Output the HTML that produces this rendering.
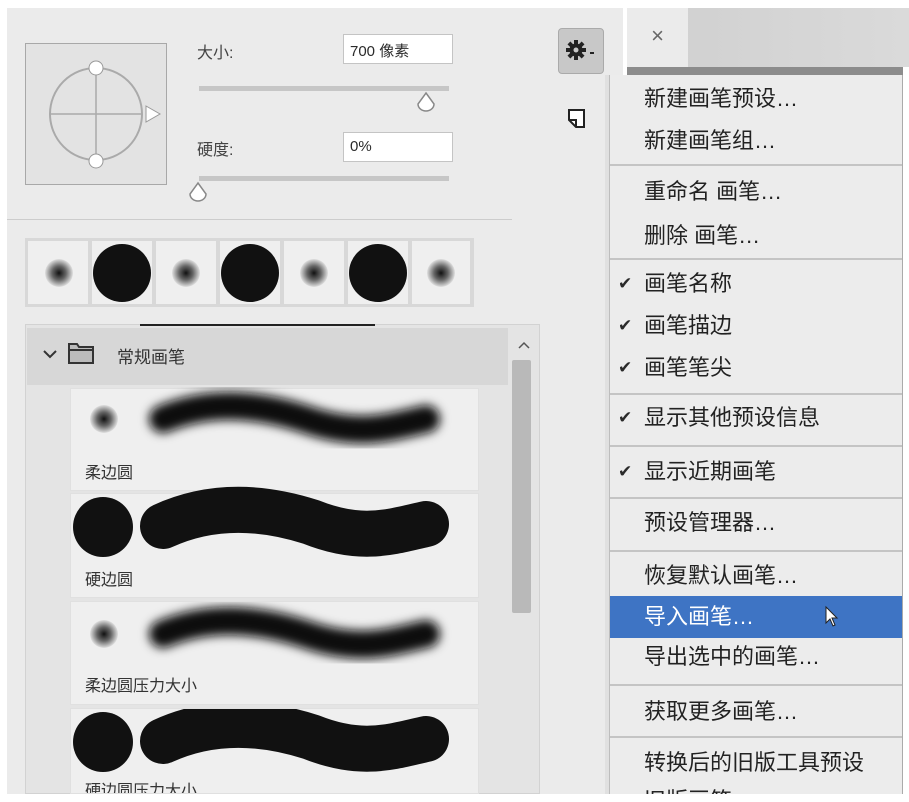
<!DOCTYPE html>
<html><head><meta charset="utf-8"><style>
*{margin:0;padding:0;box-sizing:border-box}
body{width:909px;height:802px;background:#fff;position:relative;overflow:hidden;font-family:"Liberation Sans","Noto Sans CJK SC",sans-serif;color:#2a2a2a}
.a{position:absolute}
svg{overflow:visible}
.panel{left:7px;top:8px;width:616px;height:786px;background:#ebebeb}
.lbl{font-size:16px;color:#444}
.inp{background:#fff;border:1px solid #c4c4c4;font-size:15px;padding:5px 6px;height:30px;width:110px}
.track{height:5px;background:#c6c6c6;width:250px;left:199px}
.menu{left:609px;top:75px;width:294px;height:719px;background:#ececec;border-left:1px solid #bdbdbd;border-right:1px solid #aaa;overflow:hidden}
.mi{position:absolute;left:34px;font-size:22px;color:#222;line-height:28px;white-space:nowrap}
.ck{position:absolute;left:8px;font-size:17px;line-height:28px}
.sep{position:absolute;left:0;width:292px;height:2px;background:#c4c4c4}
.item{left:70px;width:409px;background:#efefef;border:1px solid #e0e0e0}
.name{position:absolute;left:14px;font-size:16px;color:#333}
</style></head><body>
<div class="a panel"></div>
<div class="a" style="left:25px;top:43px;width:142px;height:142px;background:#e3e3e3;border:1px solid #a8a8a8"></div>
<svg class="a" style="left:25px;top:43px" width="150" height="142">
<ellipse cx="71" cy="71" rx="46" ry="46" fill="none" stroke="#aaa" stroke-width="2"/>
<line x1="25" y1="71" x2="117" y2="71" stroke="#aaa" stroke-width="1.5"/>
<line x1="71" y1="25" x2="71" y2="117" stroke="#aaa" stroke-width="1.5"/>
<circle cx="71" cy="25" r="7" fill="#fff" stroke="#999"/>
<circle cx="71" cy="118" r="7" fill="#fff" stroke="#999"/>
<path d="M121 63 L135 71 L121 79 Z" fill="#fff" stroke="#999"/>
</svg>
<div class="a lbl" style="left:197px;top:39px">大小:</div>
<div class="a inp" style="left:343px;top:34px">700 像素</div>
<div class="a track" style="top:86px"></div>
<svg class="a" style="left:414px;top:90px" width="26" height="26"><path d="M12 3 L20 14 A8 7 0 0 1 4 14 Z" fill="#fff" stroke="#888" stroke-width="1.5"/></svg>
<div class="a lbl" style="left:197px;top:136px">硬度:</div>
<div class="a inp" style="left:343px;top:132px">0%</div>
<div class="a track" style="top:176px"></div>
<svg class="a" style="left:186px;top:180px" width="26" height="26"><path d="M12 3 L20 14 A8 7 0 0 1 4 14 Z" fill="#fff" stroke="#888" stroke-width="1.5"/></svg>
<div class="a" style="left:7px;top:219px;width:505px;height:1px;background:#ccc"></div>
<div class="a" style="left:558px;top:28px;width:46px;height:46px;background:#c8c8c8;border:1px solid #aaa;border-radius:4px"></div>
<svg class="a" style="left:566px;top:40px" width="30" height="20">
<g transform="translate(10,10)" fill="#222"><circle r="6.5"/><g id="t"><rect x="-2" y="-10" width="4" height="20"/></g><use href="#t" transform="rotate(45)"/><use href="#t" transform="rotate(90)"/><use href="#t" transform="rotate(135)"/></g>
<circle cx="10" cy="10" r="2.5" fill="#c8c8c8"/><rect x="24" y="12" width="4" height="2" fill="#222"/></svg>
<svg class="a" style="left:567px;top:108px" width="20" height="22"><path d="M2 2 H17 V19 H9 L2 12 Z M2 12 H9 V19" fill="#fff" stroke="#222" stroke-width="2"/></svg>
<div class="a" style="left:605px;top:75px;width:5px;height:720px;background:#e0e0e0"></div>
<div class="a" style="left:623px;top:8px;width:4px;height:67px;background:#fff"></div>
<div class="a" style="left:627px;top:8px;width:282px;height:59px;background:linear-gradient(90deg,#cfcfcf,#dadada)"></div>
<div class="a" style="left:627px;top:8px;width:61px;height:59px;background:#ebebeb;font-size:22px;color:#666;text-align:center;line-height:56px">×</div>
<div class="a" style="left:627px;top:67px;width:276px;height:8px;background:#8c8c8c"></div>
<div class="a" style="left:25px;top:238px;width:449px;height:69px;background:#d8d8d8"></div>
<svg class="a" style="left:25px;top:238px" width="449" height="69">
<defs><radialGradient id="sg"><stop offset="0" stop-color="#111"/><stop offset=".5" stop-color="#666"/><stop offset="1" stop-color="#e0e0e0"/></radialGradient></defs>
<g fill="#efefef"><rect x="3" y="3" width="60" height="63"/><rect x="67" y="3" width="60" height="63"/><rect x="131" y="3" width="60" height="63"/><rect x="195" y="3" width="60" height="63"/><rect x="259" y="3" width="60" height="63"/><rect x="323" y="3" width="60" height="63"/><rect x="387" y="3" width="58" height="63"/></g>
<circle cx="34" cy="35" r="14" fill="url(#sg)"/><circle cx="97" cy="35" r="29" fill="#111"/>
<circle cx="161" cy="35" r="14" fill="url(#sg)"/><circle cx="225" cy="35" r="29" fill="#111"/>
<circle cx="289" cy="35" r="14" fill="url(#sg)"/><circle cx="353" cy="35" r="29" fill="#111"/>
<circle cx="416" cy="35" r="14" fill="url(#sg)"/>
</svg>
<div class="a" style="left:25px;top:324px;width:515px;height:470px;background:#e4e4e4;border:1px solid #d2d2d2"></div>
<div class="a" style="left:140px;top:324px;width:235px;height:2px;background:#222"></div>
<div class="a" style="left:27px;top:328px;width:481px;height:57px;background:#d7d7d7"></div>
<svg class="a" style="left:42px;top:348px" width="16" height="12"><path d="M2 3 L8 9 L14 3" fill="none" stroke="#333" stroke-width="2"/></svg>
<svg class="a" style="left:67px;top:342px" width="30" height="24"><path d="M2 2 H10 L12 5 H26 V21 H2 Z M2 8 H26" fill="#bbb" stroke="#333" stroke-width="2"/></svg>
<div class="a" style="left:117px;top:343px;font-size:17px;color:#333">常规画笔</div>
<svg class="a" style="left:518px;top:342px" width="12" height="8"><path d="M1 6 L6 1 L11 6" fill="none" stroke="#555" stroke-width="1.5"/></svg>
<div class="a" style="left:512px;top:360px;width:19px;height:253px;background:#b9b9b9;border-radius:2px"></div>
<svg width="0" height="0" class="a"><defs><filter id="bl" x="-20%" y="-80%" width="140%" height="260%"><feGaussianBlur stdDeviation="5"/></filter></defs></svg>
<div class="a item" style="top:388px;height:103px"><svg width="409" height="70"><circle cx="33" cy="30" r="14" fill="url(#sg)"/><path d="M92 30 C140 10 190 15 240 32 C290 48 320 38 355 30" fill="none" stroke="#111" stroke-width="28" stroke-linecap="round" filter="url(#bl)"/></svg><div class="name" style="top:70px">柔边圆</div></div>
<div class="a item" style="top:493px;height:105px"><svg width="409" height="72"><circle cx="32" cy="33" r="30" fill="#111"/><path d="M92 32 C140 10 190 12 240 28 C290 48 320 38 355 30" fill="none" stroke="#111" stroke-width="46" stroke-linecap="round"/></svg><div class="name" style="top:72px">硬边圆</div></div>
<div class="a item" style="top:601px;height:104px"><svg width="409" height="70"><circle cx="33" cy="32" r="14" fill="url(#sg)"/><path d="M92 32 C140 12 190 17 240 34 C290 50 320 40 355 32" fill="none" stroke="#111" stroke-width="28" stroke-linecap="round" filter="url(#bl)"/></svg><div class="name" style="top:70px">柔边圆压力大小</div></div>
<div class="a item" style="top:708px;height:86px;overflow:hidden"><svg width="409" height="72"><circle cx="32" cy="33" r="30" fill="#111"/><path d="M92 32 C140 10 190 12 240 28 C290 48 320 38 355 30" fill="none" stroke="#111" stroke-width="46" stroke-linecap="round"/></svg><div class="name" style="top:68px">硬边圆压力大小</div></div>
<div class="a menu">
<div class="mi" style="top:10px">新建画笔预设…</div>
<div class="mi" style="top:52px">新建画笔组…</div>
<div class="sep" style="top:89px"></div>
<div class="mi" style="top:103px">重命名 画笔…</div>
<div class="mi" style="top:147px">删除 画笔…</div>
<div class="sep" style="top:183px"></div>
<div class="ck" style="top:195px">✔</div><div class="mi" style="top:195px">画笔名称</div>
<div class="ck" style="top:237px">✔</div><div class="mi" style="top:237px">画笔描边</div>
<div class="ck" style="top:279px">✔</div><div class="mi" style="top:279px">画笔笔尖</div>
<div class="sep" style="top:318px"></div>
<div class="ck" style="top:329px">✔</div><div class="mi" style="top:329px">显示其他预设信息</div>
<div class="sep" style="top:370px"></div>
<div class="ck" style="top:383px">✔</div><div class="mi" style="top:383px">显示近期画笔</div>
<div class="sep" style="top:422px"></div>
<div class="mi" style="top:434px">预设管理器…</div>
<div class="sep" style="top:475px"></div>
<div class="mi" style="top:487px">恢复默认画笔…</div>
<div class="a" style="left:0;top:521px;width:292px;height:42px;background:#3e74c4"></div>
<div class="mi" style="top:528px;color:#fff">导入画笔…</div>
<svg class="a" style="left:214px;top:531px" width="16" height="22"><path d="M2 1 V17 L6 13 L9 20 L11 19 L8 12 H13 Z" fill="#fff" stroke="#222" stroke-width="1"/></svg>
<div class="mi" style="top:568px">导出选中的画笔…</div>
<div class="sep" style="top:609px"></div>
<div class="mi" style="top:623px">获取更多画笔…</div>
<div class="sep" style="top:661px"></div>
<div class="mi" style="top:674px">转换后的旧版工具预设</div>
<div class="mi" style="top:712px">旧版画笔</div>
</div>
<div class="a" style="left:0;top:794px;width:909px;height:8px;background:#fff"></div>
</body></html>
